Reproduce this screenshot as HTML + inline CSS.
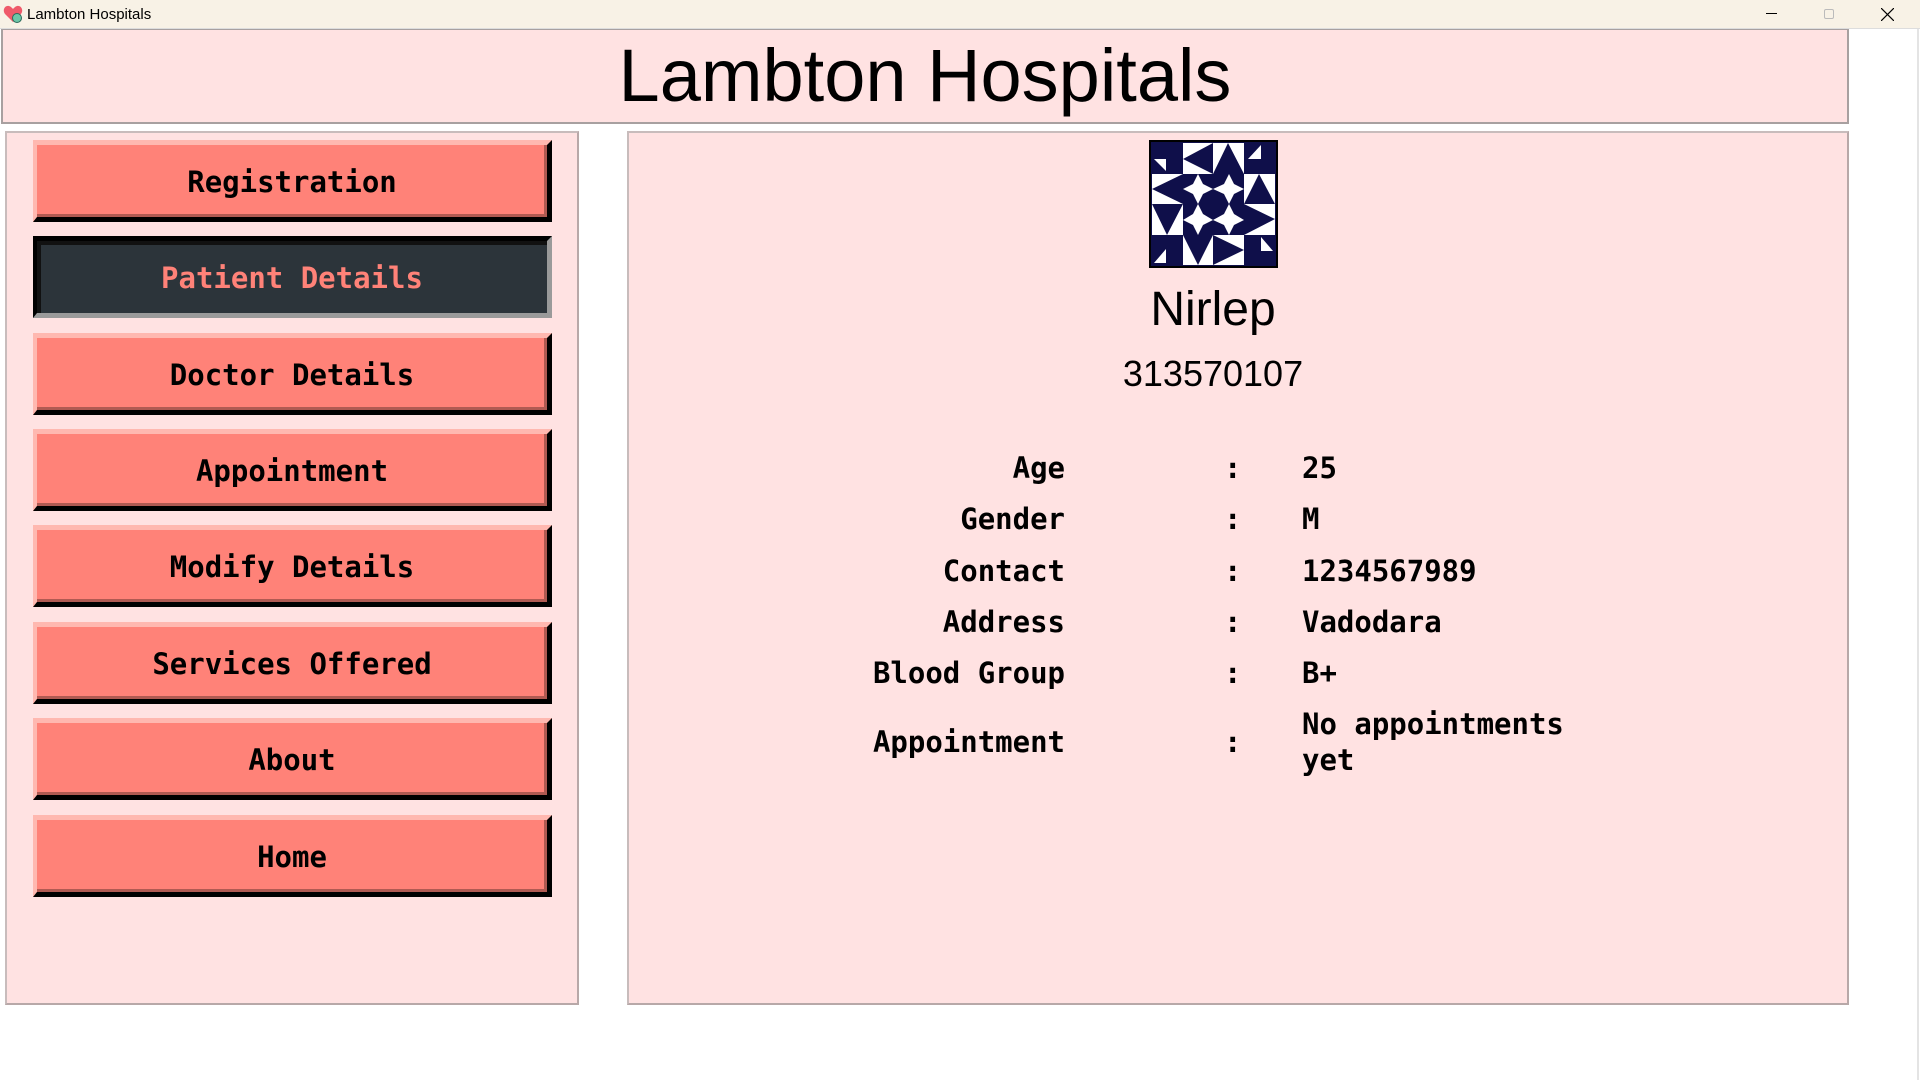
<!DOCTYPE html>
<html><head><meta charset="utf-8"><style>
*{margin:0;padding:0;box-sizing:border-box}
body{width:1920px;height:1080px;background:#fff;position:relative;overflow:hidden;font-family:"Liberation Sans",sans-serif}
.tb{position:absolute;left:0;top:0;width:1920px;height:29px;background:#f8f2e6;border-bottom:1px solid #ddd}
.tb .t{position:absolute;left:27px;top:6px;font-size:15px;color:#000}
.abs{position:absolute}
.hdr{left:1px;top:29px;width:1848px;height:95px;background:#ffe2e2;border:2px solid #a8a0a0;border-top:1px solid #a8a0a0}
.hdr div{position:absolute;left:0;right:0;top:3px;text-align:center;font-size:74px;color:#000;line-height:86px}
.pan{background:#ffe2e2;border:2px solid #b8a8a8;border-top-color:#c8bcbc;border-left-color:#c8bcbc}
.btn{position:absolute;left:33px;width:519px;height:82px;background:#ff8278;border-style:solid;border-width:5px 5px 5px 4px;border-color:#ffb8b0 #000 #000 #ffb8b0;box-shadow:inset -3px -3px 0 #b05a52;font-family:"DejaVu Sans Mono","Liberation Mono",monospace;font-weight:bold;font-size:29px;text-align:center;line-height:74px;color:#000}
.btn.act{background:#2c343a;border-color:#000 #9a9a9a #9a9a9a #000;box-shadow:inset 4px 4px 0 #111;color:#ff8278}
.m{font-family:"DejaVu Sans Mono","Liberation Mono",monospace;font-weight:bold;font-size:29px;color:#000;position:absolute;line-height:36px}
.l{right:855px;text-align:right;white-space:nowrap}
.c{left:1224px}
.v{left:1302px;white-space:nowrap}
</style></head><body>
<div class="tb">
<svg class="abs" style="left:3px;top:5px" width="20" height="18" viewBox="0 0 20 18"><path d="M10 17 L2 9 C-1 5 2 0 6 1 C8 1.5 9 3 10 4 C11 3 12 1.5 14 1 C18 0 21 5 18 9 Z" fill="#ef5a6a"/><circle cx="14" cy="13" r="4.5" fill="#6cc6a8" stroke="#2a6a5a"/></svg>
<div class="t">Lambton Hospitals</div>
<div class="abs" style="left:1766px;top:13px;width:11px;height:1px;background:#000"></div>
<div class="abs" style="left:1824px;top:9px;width:10px;height:10px;border:1px solid #bbb;border-radius:2px"></div>
<svg class="abs" style="left:1881px;top:8px" width="13" height="13"><path d="M0 0L13 13M13 0L0 13" stroke="#000" stroke-width="1.2"/></svg>
</div>
<div class="abs" style="left:1917px;top:29px;width:2px;height:1051px;background:#e4e4e4"></div>
<div class="abs hdr"><div>Lambton Hospitals</div></div>
<div class="abs pan" style="left:5px;top:131px;width:574px;height:874px"></div>
<div class="abs pan" style="left:627px;top:131px;width:1222px;height:874px"></div>
<div class="btn" style="top:140px">Registration</div>
<div class="btn act" style="top:236px">Patient Details</div>
<div class="btn" style="top:333px">Doctor Details</div>
<div class="btn" style="top:429px">Appointment</div>
<div class="btn" style="top:525px">Modify Details</div>
<div class="btn" style="top:622px">Services Offered</div>
<div class="btn" style="top:718px">About</div>
<div class="btn" style="top:815px">Home</div>
<svg class="abs" style="left:1149px;top:140px" width="129" height="128" viewBox="0 0 129 128">
<rect width="129" height="128" fill="#0f0f4a"/>
<g transform="translate(3,3)">
<rect x="0" y="0" width="123" height="122" fill="#0f0f4a"/>
<polygon points="2,16 14,16 14,28" fill="#fff"/>
<rect x="31" y="0" width="30" height="31" fill="#fff"/><polygon points="61,0 61,31 31,16" fill="#0f0f4a"/>
<rect x="61" y="0" width="31" height="31" fill="#fff"/><polygon points="76,0 92,31 61,31" fill="#0f0f4a"/>
<polygon points="109,2 109,16 96,16" fill="#fff"/>
<rect x="0" y="31" width="31" height="30" fill="#fff"/><polygon points="0,46 31,31 31,61" fill="#0f0f4a"/>
<rect x="92" y="31" width="31" height="30" fill="#fff"/><polygon points="107,31 123,61 92,61" fill="#0f0f4a"/>
<rect x="0" y="61" width="31" height="31" fill="#fff"/><polygon points="0,61 31,61 15,92" fill="#0f0f4a"/>
<rect x="92" y="61" width="31" height="31" fill="#fff"/><polygon points="92,61 123,76 92,92" fill="#0f0f4a"/>
<rect x="31" y="92" width="30" height="30" fill="#fff"/><polygon points="31,92 61,92 46,122" fill="#0f0f4a"/>
<rect x="61" y="92" width="31" height="30" fill="#fff"/><polygon points="61,92 92,107 61,122" fill="#0f0f4a"/>
<polygon points="14,106 14,120 2,120" fill="#fff"/>
<polygon points="109,94 109,108 121,108" fill="#fff"/>
<g fill="#fff">
<polygon points="46,31 51,41 61,46 51,51 46,61 41,51 31,46 41,41"/>
<polygon points="77,31 82,41 92,46 82,51 77,61 72,51 61,46 72,41"/>
<polygon points="46,61 51,71 61,77 51,82 46,92 41,82 31,77 41,71"/>
<polygon points="77,61 82,71 92,77 82,82 77,92 72,82 61,77 72,71"/>
</g></g>
<rect x="1" y="1" width="127" height="126" fill="none" stroke="#000" stroke-width="2"/>
</svg>
<div class="abs" style="left:1013px;width:400px;top:282px;text-align:center;font-size:48px;color:#000">Nirlep</div>
<div class="abs" style="left:1013px;width:400px;top:353px;text-align:center;font-size:36px;color:#000">313570107</div>
<div class="m l" style="top:450px">Age</div><div class="m c" style="top:450px">:</div><div class="m v" style="top:450px">25</div>
<div class="m l" style="top:501px">Gender</div><div class="m c" style="top:501px">:</div><div class="m v" style="top:501px">M</div>
<div class="m l" style="top:553px">Contact</div><div class="m c" style="top:553px">:</div><div class="m v" style="top:553px">1234567989</div>
<div class="m l" style="top:604px">Address</div><div class="m c" style="top:604px">:</div><div class="m v" style="top:604px">Vadodara</div>
<div class="m l" style="top:655px">Blood Group</div><div class="m c" style="top:655px">:</div><div class="m v" style="top:655px">B+</div>
<div class="m l" style="top:724px">Appointment</div><div class="m c" style="top:724px">:</div><div class="m v" style="top:706px">No appointments<br>yet</div>
</body></html>
